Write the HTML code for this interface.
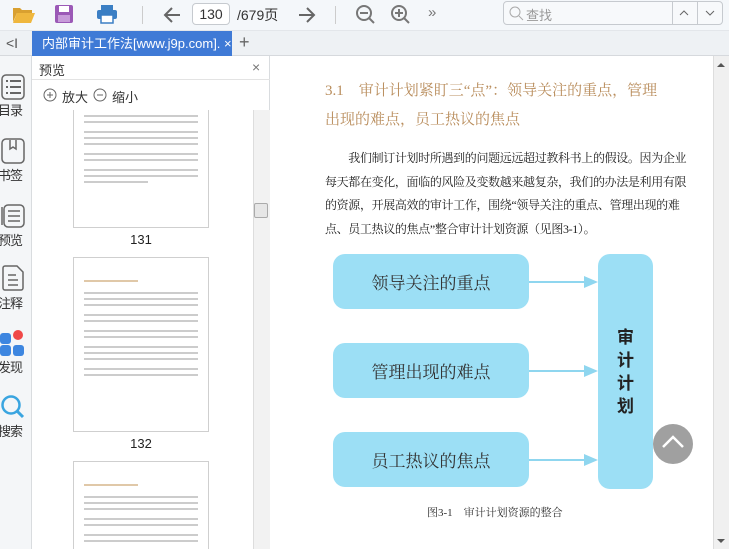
<!DOCTYPE html><html><head><meta charset="utf-8"><style>
*{margin:0;padding:0;box-sizing:border-box}
html,body{width:729px;height:549px;overflow:hidden}
body{background:#fff;font-family:"Liberation Sans","Noto Sans CJK SC",sans-serif;position:relative}
.a{position:absolute}
.tb{left:0;top:0;width:729px;height:31px;background:#f4f7fa;border-bottom:1px solid #e3e6ea}
.tabbar{left:0;top:31px;width:729px;height:25px;background:#eef1f4;border-bottom:1px solid #d6d9dd}
.side{left:0;top:56px;width:32px;height:493px;background:#f4f6f8;border-right:1px solid #d9dcdf}
.sl{left:-2px;width:30px;font-size:13px;color:#333;white-space:nowrap;letter-spacing:-1px}
.prev{left:32px;top:56px;width:238px;height:493px;background:#fff;border-right:1px solid #d9dcdf}
.thumb{background:#fff;border:1px solid #cfcfcf}
.line{height:2px;background:#ccc;margin:4px 10px 0}
.s{font-family:"Liberation Serif","Noto Serif CJK SC",serif}
.box{background:#9cdff5;border-radius:12px;font-size:17px;color:#333;display:flex;align-items:center;justify-content:center;font-family:"Liberation Serif","Noto Serif CJK SC",serif}
.arr{height:2px;background:#8fd6ef}
.clip{left:32px;top:110px;width:221px;height:439px;overflow:hidden;background:#fff}
</style></head><body>
<div class="a tb"></div>
<svg class="a" style="left:12px;top:4px" width="24" height="20"><path d="M1 4h7l2 2h10v3H5L1 18z" fill="#d9a030"/><path d="M5 9h18l-4 10H1z" fill="#efb73e"/></svg>
<svg class="a" style="left:54px;top:4px" width="20" height="20"><rect x="1" y="1" width="18" height="18" rx="2" fill="#9b59b6"/><rect x="5" y="2" width="10" height="6" fill="#fff"/><rect x="4" y="11" width="12" height="7" fill="#c79bd9"/></svg>
<svg class="a" style="left:96px;top:4px" width="22" height="20"><rect x="5" y="1" width="12" height="5" fill="#3b7fc4"/><rect x="1" y="6" width="20" height="9" rx="2" fill="#3b7fc4"/><rect x="5" y="11" width="12" height="8" fill="#fff" stroke="#3b7fc4" stroke-width="1.5"/></svg>
<div class="a" style="left:142px;top:6px;width:1px;height:18px;background:#ccc"></div>
<svg class="a" style="left:162px;top:5px" width="20" height="20"><path d="M18 10H3M10 3L3 10l7 7" stroke="#666" stroke-width="2" fill="none"/></svg>
<div class="a" style="left:192px;top:3px;width:38px;height:22px;border:1px solid #c6cacf;border-radius:4px;background:#fff;font-size:14px;text-align:center;line-height:20px;color:#333">130</div>
<div class="a" style="left:237px;top:5px;font-size:14px;color:#333">/679页</div>
<svg class="a" style="left:297px;top:5px" width="20" height="20"><path d="M2 10h15M10 3l7 7-7 7" stroke="#666" stroke-width="2" fill="none"/></svg>
<div class="a" style="left:335px;top:6px;width:1px;height:18px;background:#ccc"></div>
<svg class="a" style="left:355px;top:4px" width="22" height="22"><circle cx="9" cy="9" r="7" stroke="#777" stroke-width="2" fill="none"/><path d="M5 9h8M14 14l5 5" stroke="#777" stroke-width="2"/></svg>
<svg class="a" style="left:390px;top:4px" width="22" height="22"><circle cx="9" cy="9" r="7" stroke="#777" stroke-width="2" fill="none"/><path d="M5 9h8M9 5v8M14 14l5 5" stroke="#777" stroke-width="2"/></svg>
<div class="a" style="left:428px;top:4px;font-size:15px;color:#777">»</div>
<div class="a" style="left:503px;top:1px;width:220px;height:24px;border:1px solid #c6cacf;border-radius:4px;background:#f7f9fb"></div>
<svg class="a" style="left:508px;top:5px" width="16" height="16"><circle cx="7" cy="7" r="5" stroke="#aaa" fill="none"/><path d="M11 11l4 4" stroke="#aaa"/></svg>
<div class="a" style="left:526px;top:5px;font-size:13px;color:#999">查找</div>
<div class="a" style="left:672px;top:2px;width:1px;height:22px;background:#c6cacf"></div>
<div class="a" style="left:697px;top:2px;width:1px;height:22px;background:#c6cacf"></div>
<svg class="a" style="left:678px;top:8px" width="12" height="10"><path d="M2 7l4-4 4 4" stroke="#666" fill="none"/></svg>
<svg class="a" style="left:704px;top:8px" width="12" height="10"><path d="M2 3l4 4 4-4" stroke="#666" fill="none"/></svg>

<div class="a tabbar"></div>
<div class="a" style="left:6px;top:35px;font-size:14px;color:#555">&lt;I</div>
<div class="a" style="left:32px;top:31px;width:200px;height:25px;background:#3f7ad6;color:#fff;font-size:13px;line-height:25px;padding-left:10px;white-space:nowrap;overflow:hidden">内部审计工作法[www.j9p.com]. ×</div>
<div class="a" style="left:239px;top:32px;font-size:18px;color:#666">+</div>

<div class="a side"></div>
<svg class="a" style="left:1px;top:74px" width="24" height="26"><rect x="1" y="1" width="22" height="24" rx="4" stroke="#666" stroke-width="1.5" fill="none"/><path d="M5 7h2M9 7h11M5 13h2M9 13h11M5 19h2M9 19h11" stroke="#666" stroke-width="2"/></svg>
<div class="a sl" style="top:100px">目录</div>
<svg class="a" style="left:1px;top:138px" width="24" height="26"><rect x="1" y="1" width="22" height="24" rx="4" stroke="#666" stroke-width="1.5" fill="none"/><path d="M9 2v9l3-2 3 2V2" stroke="#666" stroke-width="1.5" fill="none"/></svg>
<div class="a sl" style="top:165px">书签</div>
<svg class="a" style="left:0px;top:201px" width="26" height="28"><rect x="4" y="4" width="20" height="22" rx="4" stroke="#666" stroke-width="1.5" fill="none"/><path d="M2 24V6M8 10h12M8 15h12M8 20h12" stroke="#666" stroke-width="1.5"/></svg>
<div class="a sl" style="top:230px">预览</div>
<svg class="a" style="left:1px;top:265px" width="24" height="26"><path d="M2 3a2 2 0 012-2h12l6 6v16a2 2 0 01-2 2H4a2 2 0 01-2-2z" stroke="#666" stroke-width="1.5" fill="none"/><path d="M7 10h8M7 15h10M7 20h10" stroke="#666" stroke-width="1.5"/></svg>
<div class="a sl" style="top:293px">注释</div>
<div class="a" style="left:0;top:333px;width:11px;height:11px;background:#3d86e0;border-radius:3px"></div>
<div class="a" style="left:13px;top:330px;width:10px;height:10px;background:#f04848;border-radius:50%"></div>
<div class="a" style="left:0;top:345px;width:11px;height:11px;background:#3d86e0;border-radius:3px"></div>
<div class="a" style="left:13px;top:345px;width:11px;height:11px;background:#3d86e0;border-radius:3px"></div>
<div class="a sl" style="top:357px">发现</div>
<svg class="a" style="left:0;top:394px" width="26" height="26"><circle cx="11" cy="11" r="8.5" stroke="#3aa5e0" stroke-width="2.5" fill="none"/><path d="M17 17l6 6" stroke="#3aa5e0" stroke-width="3"/></svg>
<div class="a sl" style="top:421px">搜索</div>

<div class="a prev"></div>
<div class="a" style="left:39px;top:60px;font-size:13px;color:#333">预览</div>
<div class="a" style="left:252px;top:59px;font-size:14px;color:#777">×</div>
<div class="a" style="left:32px;top:79px;width:238px;height:1px;background:#e3e3e3"></div>
<svg class="a" style="left:43px;top:88px" width="14" height="14"><circle cx="7" cy="7" r="6" stroke="#666" fill="none"/><path d="M4 7h6M7 4v6" stroke="#666"/></svg>
<div class="a" style="left:62px;top:87px;font-size:13px;color:#333">放大</div>
<svg class="a" style="left:93px;top:88px" width="14" height="14"><circle cx="7" cy="7" r="6" stroke="#666" fill="none"/><path d="M4 7h6" stroke="#666"/></svg>
<div class="a" style="left:112px;top:87px;font-size:13px;color:#333">缩小</div>
<div class="a clip">
<div class="a thumb" style="left:41px;top:-2px;width:136px;height:120px;padding-top:2px">
<div class="line"></div><div class="line"></div><div class="line" style="margin-top:8px"></div><div class="line"></div><div class="line"></div><div class="line" style="margin-top:8px"></div><div class="line"></div><div class="line" style="margin-top:8px"></div><div class="line"></div><div class="line" style="margin-right:60px"></div></div>
<div class="a" style="left:41px;top:122px;width:136px;text-align:center;font-size:13px;color:#222">131</div>
<div class="a thumb" style="left:41px;top:147px;width:136px;height:175px;padding-top:18px">
<div class="line" style="background:#e0c8a8;margin-right:70px"></div><div class="line" style="margin-top:10px"></div><div class="line"></div><div class="line"></div><div class="line" style="margin-top:8px"></div><div class="line"></div><div class="line" style="margin-top:8px"></div><div class="line"></div><div class="line" style="margin-top:8px"></div><div class="line"></div><div class="line"></div><div class="line" style="margin-top:8px"></div><div class="line"></div></div>
<div class="a" style="left:41px;top:326px;width:136px;text-align:center;font-size:13px;color:#222">132</div>
<div class="a thumb" style="left:41px;top:351px;width:136px;height:100px;padding-top:18px">
<div class="line" style="background:#e0c8a8;margin-right:70px"></div><div class="line" style="margin-top:10px"></div><div class="line"></div><div class="line"></div><div class="line" style="margin-top:8px"></div><div class="line"></div><div class="line" style="margin-top:8px"></div><div class="line"></div></div>
</div>
<div class="a" style="left:253px;top:110px;width:17px;height:439px;background:#f2f2f2;border-left:1px solid #ddd"></div>
<div class="a" style="left:254px;top:203px;width:14px;height:15px;background:#e6e6e6;border:1px solid #aaa;border-radius:2px"></div>

<div class="a s" style="left:325px;top:77px;font-size:15px;color:#b98d5c;line-height:29px;white-space:nowrap">3.1&nbsp;&nbsp;&nbsp;&nbsp;审计计划紧盯三“点”：领导关注的重点，管理<br>出现的难点，员工热议的焦点</div>
<div class="a s" style="left:325px;top:147px;font-size:12px;color:#222;line-height:23.5px;white-space:nowrap;letter-spacing:-0.35px">&emsp;&emsp;我们制订计划时所遇到的问题远远超过教科书上的假设。因为企业<br>每天都在变化，面临的风险及变数越来越复杂，我们的办法是利用有限<br>的资源，开展高效的审计工作，围绕“领导关注的重点、管理出现的难<br>点、员工热议的焦点”整合审计计划资源（见图3-1）。</div>
<div class="a box" style="left:333px;top:254px;width:196px;height:55px">领导关注的重点</div>
<div class="a box" style="left:333px;top:343px;width:196px;height:55px">管理出现的难点</div>
<div class="a box" style="left:333px;top:432px;width:196px;height:55px">员工热议的焦点</div>
<div class="a arr" style="left:529px;top:281px;width:60px"></div>
<div class="a arr" style="left:529px;top:370px;width:60px"></div>
<div class="a arr" style="left:529px;top:459px;width:60px"></div>
<svg class="a" style="left:584px;top:276px" width="14" height="12"><path d="M0 0l14 6-14 6z" fill="#8fd6ef"/></svg>
<svg class="a" style="left:584px;top:365px" width="14" height="12"><path d="M0 0l14 6-14 6z" fill="#8fd6ef"/></svg>
<svg class="a" style="left:584px;top:454px" width="14" height="12"><path d="M0 0l14 6-14 6z" fill="#8fd6ef"/></svg>
<div class="a box" style="left:598px;top:254px;width:55px;height:235px;font-family:'Liberation Sans','Noto Sans CJK SC',sans-serif;font-weight:bold;font-size:17px;line-height:23px;text-align:center;color:#222">审<br>计<br>计<br>划</div>
<div class="a s" style="left:427px;top:504px;font-size:11px;color:#333">图3-1&nbsp;&nbsp;&nbsp;&nbsp;审计计划资源的整合</div>
<div class="a" style="left:653px;top:424px;width:40px;height:40px;border-radius:50%;background:#a0a0a0"></div>
<svg class="a" style="left:661px;top:434px" width="24" height="16"><path d="M2 13l10-10 10 10" stroke="#fff" stroke-width="2.5" fill="none"/></svg>
<div class="a" style="left:713px;top:56px;width:16px;height:493px;background:#f0f0f0;border-left:1px solid #ddd"></div>
<svg class="a" style="left:716px;top:62px" width="10" height="6"><path d="M1 5l4-4 4 4z" fill="#555"/></svg>
<svg class="a" style="left:716px;top:538px" width="10" height="6"><path d="M1 1l4 4 4-4z" fill="#555"/></svg>
</body></html>
